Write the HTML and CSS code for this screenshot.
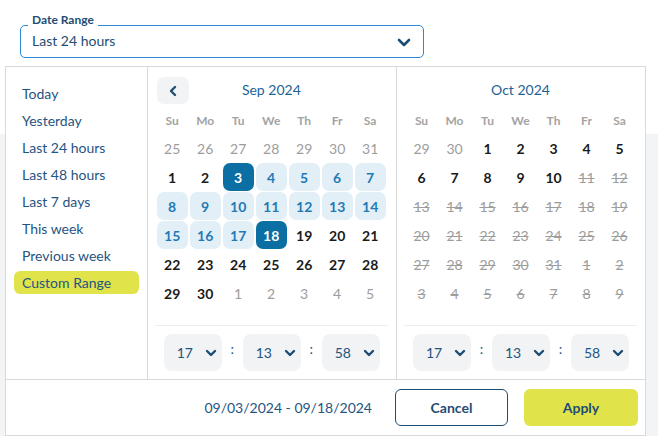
FILE: index.html
```html
<!DOCTYPE html>
<html>
<head>
<meta charset="utf-8">
<link rel="stylesheet" href="styles.css">
</head>
<body>
<div class="page">
  <header class="top">
    <div class="field">
      <span class="field-label">Date Range</span>
      <span class="field-value">Last 24 hours</span>
      <svg class="field-chev" width="14" height="9" viewBox="0 0 14 9"><polyline points="2,2 7,7 12,2" fill="none" stroke="#1e4d74" stroke-width="2.6" stroke-linecap="round" stroke-linejoin="round"/></svg>
    </div>
  </header>
  <main class="content"></main>

  <div class="popover">
    <div class="pop-main">
      <ul class="ranges">
        <li class="range">Today</li>
        <li class="range">Yesterday</li>
        <li class="range">Last 24 hours</li>
        <li class="range">Last 48 hours</li>
        <li class="range">Last 7 days</li>
        <li class="range">This week</li>
        <li class="range">Previous week</li>
        <li class="range active">Custom Range</li>
      </ul>

      <section class="cal cal-left">
        <div class="cal-head">
          <button class="prev"><svg width="10" height="12" viewBox="0 0 10 12"><polyline points="7,2 3,6 7,10" fill="none" stroke="#1e4d74" stroke-width="2.4" stroke-linecap="round" stroke-linejoin="round"/></svg></button>
          <span class="cal-title">Sep 2024</span>
        </div>
        <div class="grid">
          <span class="wd">Su</span><span class="wd">Mo</span><span class="wd">Tu</span><span class="wd">We</span><span class="wd">Th</span><span class="wd">Fr</span><span class="wd">Sa</span>
          <span class="d off">25</span><span class="d off">26</span><span class="d off">27</span><span class="d off">28</span><span class="d off">29</span><span class="d off">30</span><span class="d off">31</span>
          <span class="d">1</span><span class="d">2</span><span class="d sel">3</span><span class="d rng">4</span><span class="d rng">5</span><span class="d rng">6</span><span class="d rng">7</span>
          <span class="d rng">8</span><span class="d rng">9</span><span class="d rng">10</span><span class="d rng">11</span><span class="d rng">12</span><span class="d rng">13</span><span class="d rng">14</span>
          <span class="d rng">15</span><span class="d rng">16</span><span class="d rng">17</span><span class="d sel">18</span><span class="d">19</span><span class="d">20</span><span class="d">21</span>
          <span class="d">22</span><span class="d">23</span><span class="d">24</span><span class="d">25</span><span class="d">26</span><span class="d">27</span><span class="d">28</span>
          <span class="d">29</span><span class="d">30</span><span class="d off">1</span><span class="d off">2</span><span class="d off">3</span><span class="d off">4</span><span class="d off">5</span>
        </div>
        <div class="time">
          <div class="tsel"><span>17</span><svg width="12" height="8" viewBox="0 0 12 8"><polyline points="2,2 6,6 10,2" fill="none" stroke="#1e4d74" stroke-width="2.4" stroke-linecap="round" stroke-linejoin="round"/></svg></div>
          <span class="colon">:</span>
          <div class="tsel"><span>13</span><svg width="12" height="8" viewBox="0 0 12 8"><polyline points="2,2 6,6 10,2" fill="none" stroke="#1e4d74" stroke-width="2.4" stroke-linecap="round" stroke-linejoin="round"/></svg></div>
          <span class="colon">:</span>
          <div class="tsel"><span>58</span><svg width="12" height="8" viewBox="0 0 12 8"><polyline points="2,2 6,6 10,2" fill="none" stroke="#1e4d74" stroke-width="2.4" stroke-linecap="round" stroke-linejoin="round"/></svg></div>
        </div>
      </section>

      <section class="cal cal-right">
        <div class="cal-head">
          <span class="cal-title">Oct 2024</span>
        </div>
        <div class="grid">
          <span class="wd">Su</span><span class="wd">Mo</span><span class="wd">Tu</span><span class="wd">We</span><span class="wd">Th</span><span class="wd">Fr</span><span class="wd">Sa</span>
          <span class="d off">29</span><span class="d off">30</span><span class="d">1</span><span class="d">2</span><span class="d">3</span><span class="d">4</span><span class="d">5</span>
          <span class="d">6</span><span class="d">7</span><span class="d">8</span><span class="d">9</span><span class="d">10</span><span class="d dis">11</span><span class="d dis">12</span>
          <span class="d dis">13</span><span class="d dis">14</span><span class="d dis">15</span><span class="d dis">16</span><span class="d dis">17</span><span class="d dis">18</span><span class="d dis">19</span>
          <span class="d dis">20</span><span class="d dis">21</span><span class="d dis">22</span><span class="d dis">23</span><span class="d dis">24</span><span class="d dis">25</span><span class="d dis">26</span>
          <span class="d dis">27</span><span class="d dis">28</span><span class="d dis">29</span><span class="d dis">30</span><span class="d dis">31</span><span class="d dis">1</span><span class="d dis">2</span>
          <span class="d dis">3</span><span class="d dis">4</span><span class="d dis">5</span><span class="d dis">6</span><span class="d dis">7</span><span class="d dis">8</span><span class="d dis">9</span>
        </div>
        <div class="time">
          <div class="tsel"><span>17</span><svg width="12" height="8" viewBox="0 0 12 8"><polyline points="2,2 6,6 10,2" fill="none" stroke="#1e4d74" stroke-width="2.4" stroke-linecap="round" stroke-linejoin="round"/></svg></div>
          <span class="colon">:</span>
          <div class="tsel"><span>13</span><svg width="12" height="8" viewBox="0 0 12 8"><polyline points="2,2 6,6 10,2" fill="none" stroke="#1e4d74" stroke-width="2.4" stroke-linecap="round" stroke-linejoin="round"/></svg></div>
          <span class="colon">:</span>
          <div class="tsel"><span>58</span><svg width="12" height="8" viewBox="0 0 12 8"><polyline points="2,2 6,6 10,2" fill="none" stroke="#1e4d74" stroke-width="2.4" stroke-linecap="round" stroke-linejoin="round"/></svg></div>
        </div>
      </section>
    </div>
    <footer class="pop-foot">
      <span class="range-text">09/03/2024 - 09/18/2024</span>
      <button class="btn btn-cancel">Cancel</button>
      <button class="btn btn-apply">Apply</button>
    </footer>
  </div>
</div>
</body>
</html>
```

FILE: styles.css
```css
* { box-sizing: border-box; }
html, body { margin: 0; padding: 0; }
body {
  font-family: Lato, "Liberation Sans", sans-serif;
  background: #ffffff;
  width: 658px;
  height: 436px;
  overflow: hidden;
}
.page {
  position: relative;
  display: flex;
  flex-direction: column;
  height: 436px;
}
.top {
  height: 134px;
  padding: 25px 0 0 20px;
  background: #fff;
}
.field {
  position: relative;
  width: 404px;
  height: 33px;
  border: 1px solid #2b8ad8;
  border-radius: 5px;
  display: flex;
  align-items: center;
  padding: 0 12px 0 11px;
  justify-content: space-between;
}
.field-label {
  position: absolute;
  left: 7px;
  top: -13px;
  padding: 0 4px;
  background: #fff;
  font-size: 12px;
  font-weight: 700;
  line-height: 14px;
  color: #1e4d74;
}
.field-value {
  font-size: 14px;
  color: #1e4d74;
  margin-top: -3px;
}
.field-chev { margin-top: 2px; }
.content {
  flex: 1;
  background: #f3f4f6;
}

.popover {
  position: absolute;
  left: 5px;
  top: 66px;
  width: 641px;
  height: 370px;
  background: #fff;
  border: 1px solid #d9d9d9;
  display: flex;
  flex-direction: column;
}
.pop-main {
  display: flex;
  height: 313px;
  border-bottom: 1px solid #d9d9d9;
}
.ranges {
  list-style: none;
  margin: 0;
  width: 142px;
  padding: 15px 8px 0 8px;
  border-right: 1px solid #d9d9d9;
  display: flex;
  flex-direction: column;
  gap: 4px;
}
.range {
  height: 23px;
  line-height: 23px;
  padding-left: 8px;
  font-size: 14px;
  color: #1f5582;
  border-radius: 6px;
}
.range.active { background: #e1e34b; }

.cal {
  display: flex;
  flex-direction: column;
  padding: 10px 8px 8px 7px;
}
.cal-left { width: 250px; border-right: 1px solid #d9d9d9; }
.cal-right { width: 248px; }
.cal-head {
  position: relative;
  height: 27px;
  margin: 0 2px 3px 2px;
  display: flex;
  align-items: center;
  justify-content: center;
}
.prev {
  position: absolute;
  left: 0;
  top: 0;
  width: 32px;
  height: 27px;
  border: 0;
  border-radius: 7px;
  background: #f1f3f5;
  display: flex;
  align-items: center;
  justify-content: center;
  padding: 0;
}
.cal-title {
  font-size: 14px;
  color: #1b6397;
  width: 229px;
  text-align: center;
  margin-top: -2px;
}
.grid {
  display: grid;
  grid-template-columns: repeat(7, 31px);
  grid-template-rows: 26px repeat(6, 28px);
  column-gap: 2px;
  row-gap: 1px;
  margin-left: 2px;
}
.wd {
  display: flex;
  align-items: center;
  justify-content: center;
  font-size: 12px;
  font-weight: 700;
  color: #a3a3a3;
}
.d {
  display: flex;
  align-items: center;
  justify-content: center;
  font-size: 14px;
  font-weight: 700;
  color: #1a1a1a;
  border-radius: 7px;
}
.d.off { color: #9d9d9d; font-weight: 400; }
.d.dis { color: #9d9d9d; font-weight: 400; text-decoration: line-through; }
.d.rng { background: #e3eff7; color: #1f7ab5; font-weight: 700; }
.d.sel { background: #0b6fa4; color: #fff; }

.time {
  margin-top: auto;
  border-top: 1px solid #ececec;
  padding: 8px 0 0 9px;
  display: flex;
  align-items: center;
}
.tsel {
  width: 58px;
  height: 37px;
  border-radius: 8px;
  background: #f1f3f5;
  display: flex;
  align-items: center;
  justify-content: space-between;
  padding: 0 5px 0 13px;
  font-size: 14px;
  color: #1f5582;
}
.colon {
  width: 21px;
  text-align: center;
  font-size: 14px;
  color: #1f5582;
  margin-top: -8px;
}

.pop-foot {
  flex: 1;
  display: flex;
  align-items: center;
  justify-content: flex-end;
  padding-right: 7px;
}
.range-text {
  font-size: 14px;
  color: #1f5582;
  margin-right: 23px;
}
.btn {
  height: 37px;
  border-radius: 6px;
  font-family: Lato, "Liberation Sans", sans-serif;
  font-size: 14px;
  font-weight: 700;
  color: #1e4d74;
  padding: 0;
}
.btn-cancel {
  width: 113px;
  background: #fff;
  border: 1.5px solid #1e4d74;
  margin-right: 16px;
}
.btn-apply {
  width: 114px;
  background: #e1e34b;
  border: 0;
}
```
